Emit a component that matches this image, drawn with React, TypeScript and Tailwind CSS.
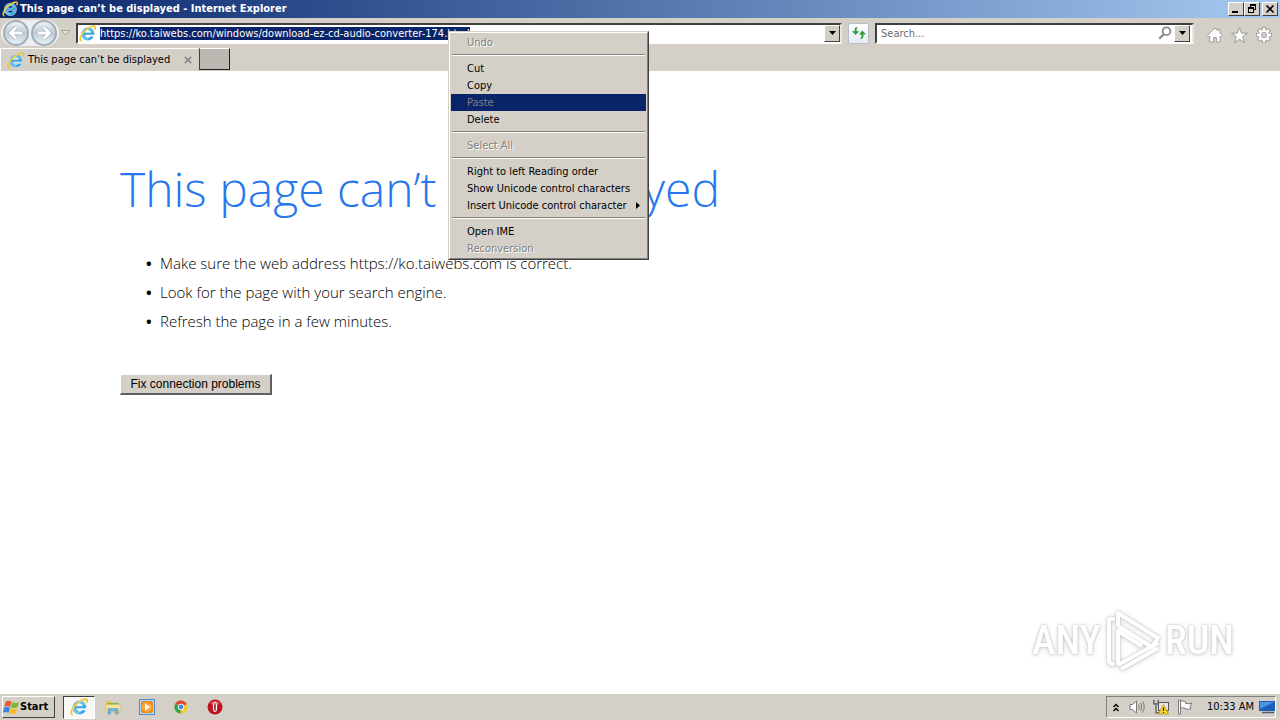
import type { ReactNode } from 'react';

type MenuEntry = { label: string; disabled?: boolean; active?: boolean; submenu?: boolean };

const menuGroups: MenuEntry[][] = [
  [{ label: 'Undo', disabled: true }],
  [
    { label: 'Cut' },
    { label: 'Copy' },
    { label: 'Paste', disabled: true, active: true },
    { label: 'Delete' },
  ],
  [{ label: 'Select All', disabled: true }],
  [
    { label: 'Right to left Reading order' },
    { label: 'Show Unicode control characters' },
    { label: 'Insert Unicode control character', submenu: true },
  ],
  [{ label: 'Open IME' }, { label: 'Reconversion', disabled: true }],
];

const tips = [
  'Make sure the web address https://ko.taiwebs.com is correct.',
  'Look for the page with your search engine.',
  'Refresh the page in a few minutes.',
];

const raised = 'bg-[#d4d0c8] border border-t-white border-l-white border-r-[#404040] border-b-[#404040]';

function IeIcon({ className }: { className: string }) {
  return (
    <svg viewBox="0 0 16 16" className={className} aria-hidden="true">
      <path
        fillRule="evenodd"
        d="M8.500 2.200a6 6 0 0 0-6.200 6.200c0 3.600 2.600 6.200 6.200 6.200 2.800 0 4.900-1.500 5.700-4h-3.500c-.4.800-1.200 1.300-2.200 1.300-1.600 0-2.600-1-2.700-2.500h8.700c.3-4.300-2.100-7.200-6-7.200zM5.900 7c.3-1.400 1.200-2.200 2.600-2.200S10.900 5.600 11.100 7z"
        fill="#36a6e6"
        stroke="#e8f6fd"
        strokeWidth=".5"
      />
      <path d="M3.600 7.600C4.100 5 6 3.500 8.500 3.400c2.300 0 3.700 1.100 4.300 3M4 9.800c.6 2.200 2.300 3.500 4.500 3.500" fill="none" stroke="#8edbfa" strokeWidth="0.900" />
      <path d="M2.400 15C-.4 14.300 1.600 8.800 6.200 4.900 10 1.600 14.300.1 15.100 1.700c.3.700.1 1.700-.4 2.600" fill="none" stroke="#f0c22c" strokeWidth="1.500" />
      <path d="M2.200 12.600C2 10.600 4 7.200 6.800 4.900c2.400-2 5-3.200 6.500-3.200" fill="none" stroke="#fbe68a" strokeWidth="0.500" />
    </svg>
  );
}

function NavButton({ label, flip }: { label: string; flip?: boolean }) {
  return (
    <button
      aria-label={label}
      className="flex size-[26px] items-center justify-center rounded-full border-2 border-[#a4adb7] bg-linear-to-b from-[#edf1f4] via-[#bfcad5] to-[#e4f4fb]"
    >
      <svg viewBox="0 0 16 16" className={flip ? 'size-4 rotate-180' : 'size-4'}>
        <path d="M8 2.500L2.500 8 8 13.500M3 8h11" fill="none" stroke="#9aa6b2" strokeWidth="4" />
        <path d="M8 2.500L2.500 8 8 13.500M3 8h11" fill="none" stroke="#fff" strokeWidth="2.800" />
      </svg>
    </button>
  );
}

function DropButton({ label }: { label: string }) {
  return (
    <button aria-label={label} className={`flex h-[17px] w-4 shrink-0 items-center justify-center ${raised}`}>
      <svg viewBox="0 0 7 4" className="h-1 w-[7px]">
        <path d="M0 0h7L3.500 4z" />
      </svg>
    </button>
  );
}

function WindowButton({ label, children }: { label: string; children: ReactNode }) {
  return (
    <button aria-label={label} className={`h-3.5 w-4 ${raised}`}>
      <svg viewBox="0 0 14 12" className="h-3 w-3.5" fill="none" stroke="#000" shapeRendering="crispEdges">
        {children}
      </svg>
    </button>
  );
}

function TitleBar() {
  return (
    <header className="flex h-[18px] shrink-0 items-center bg-linear-to-r from-[#0a246a] to-[#a6caf0] px-0.5 text-white">
      <IeIcon className="mr-0.5 size-4" />
      <h1 className="flex-1 text-[11px] leading-4 font-bold">This page can’t be displayed - Internet Explorer</h1>
      <WindowButton label="Minimize">
        <path d="M3 9h6" strokeWidth="2" />
      </WindowButton>
      <WindowButton label="Restore">
        <path d="M5 1.500h6M5 2.500h6M5.500 1v3M10.500 1v6M9 6.500h2M3 4.500h6M3 5.500h6M3.500 4v6M8.500 4v6M3 9.500h6" />
      </WindowButton>
      <span className="w-0.5" />
      <WindowButton label="Close">
        <path d="M3.500 2.500l7 7M10.500 2.500l-7 7" strokeWidth="1.600" shapeRendering="auto" />
      </WindowButton>
    </header>
  );
}

function Toolbar() {
  return (
    <div className="flex h-[30px] shrink-0 items-center">
      <div className="flex w-[76px] shrink-0 items-center pl-px">
        <div className="flex gap-0.5 rounded-full bg-[#eceeef] px-0.5">
          <NavButton label="Back" />
          <NavButton label="Forward" flip />
        </div>
        <button aria-label="Recent pages" className="ml-0.5">
          <svg viewBox="0 0 9 6" className="h-1.5 w-[9px]">
            <path d="M.5.5h8l-4 4.500z" fill="#e4e2de" stroke="#aca899" />
          </svg>
        </button>
      </div>
      <div className="flex h-[21px] min-w-0 flex-1 items-center border-2 border-t-[#404040] border-r-[#e8e6e1] border-b-white border-l-[#404040] bg-white">
        <IeIcon className="mr-1 ml-px size-[17px] shrink-0" />
        <input
          aria-label="Address"
          readOnly
          value="https://ko.taiwebs.com/windows/download-ez-cd-audio-converter-174.html"
          className="field-sizing-content h-[13px] bg-[#0a246a] text-[11px] leading-[13px] text-white outline-none"
        />
        <span className="flex-1" />
        <DropButton label="Show address list" />
      </div>
      <button aria-label="Refresh" className="mx-1.5 flex size-[21px] shrink-0 items-center justify-center rounded-xs border border-[#b6bfc9] bg-linear-to-b from-white to-[#e3edf4]">
        <svg viewBox="0 0 16 16" className="size-4" fill="#2f9e3a">
          <path d="M6.800 2C4.500 2 3.600 3 3.600 5v1.200H1L4.600 10l3.600-3.800H5.600V5c0-1.200.3-1.800 1.200-3zM9 14c2.400 0 3.400-1 3.400-3V9.400H15l-3.600-3.900-3.600 3.900h2.600V11c0 1.200-.4 1.800-1.400 3z" />
        </svg>
      </button>
      <div className="flex h-[21px] w-[319px] shrink-0 items-center border-2 border-t-[#404040] border-r-[#e8e6e1] border-b-white border-l-[#404040] bg-white pr-0.5">
        <input
          aria-label="Search"
          placeholder="Search..."
          className="h-[17px] min-w-0 flex-1 pt-px pl-1 text-[11px] leading-4 outline-none placeholder:text-[#6d6d6d]"
        />
        <button aria-label="Search the web" className="mr-0.5">
          <svg viewBox="0 0 14 14" className="size-3.5" fill="none" stroke="#8a8a8a" strokeWidth="1.800">
            <circle cx="8.500" cy="5.200" r="3.900" />
            <path d="M5.600 8.400L1.200 12.800" strokeWidth="2.200" />
          </svg>
        </button>
        <DropButton label="Search options" />
      </div>
      <nav className="flex w-[86px] shrink-0 items-center justify-end gap-2 pt-1 pr-2">
        <button aria-label="Home">
          <svg viewBox="0 0 16 16" className="size-4" fill="#fff" stroke="#969696" strokeWidth=".900" strokeLinejoin="round">
            <path d="M8 1L.6 8.400l1.500 1.500.7-.7V15h3.800v-4.500h2.800V15h3.800V9.200l.7.700 1.500-1.500-2.500-2.500V2.200h-2.200v1.500z" />
          </svg>
        </button>
        <button aria-label="Favorites">
          <svg viewBox="0 0 16 16" className="size-[17px]" fill="#fff" stroke="#969696" strokeWidth=".900" strokeLinejoin="round">
            <path d="M8 .6l1.900 5.200h5.500L11 9.200l1.600 5.600L8 11.500l-4.600 3.300L5 9.200.6 5.800h5.500z" />
          </svg>
        </button>
        <button aria-label="Tools">
          <svg viewBox="0 0 16 16" className="size-4">
            <g stroke="#969696" strokeWidth="3.800">
              <path d="M8 0v16M0 8h16M2.400 2.400l11.200 11.200M13.600 2.400L2.400 13.600" />
            </g>
            <circle cx="8" cy="8" r="5.700" fill="#969696" />
            <g stroke="#fff" strokeWidth="2.300">
              <path d="M8 .8v14.400M.8 8h14.400M3 3l10 10M13 3L3 13" />
            </g>
            <circle cx="8" cy="8" r="4" fill="#d4d0c8" stroke="#fff" strokeWidth="2.500" />
            <circle cx="8" cy="8" r="2.600" fill="#d4d0c8" stroke="#969696" strokeWidth=".800" />
          </svg>
        </button>
      </nav>
    </div>
  );
}

function TabBar() {
  return (
    <div className="flex h-[23px] shrink-0 items-start">
      <div className="flex h-[23px] w-[198px] items-center border-t border-l border-white pr-1.5 pl-1.5">
        <IeIcon className="mr-1 size-[17px]" />
        <a href="#page" className="flex-1 text-[11px] leading-4 whitespace-nowrap">This page can’t be displayed</a>
        <button aria-label="Close tab">
          <svg viewBox="0 0 8 8" className="size-2">
            <path d="M.8.8l6.400 6.400M7.200.8L.8 7.200" stroke="#8a8a8a" strokeWidth="1.800" />
          </svg>
        </button>
      </div>
      <button aria-label="New tab" className="ml-px h-[22px] w-[31px] border border-t-white border-r-[#202020] border-b-[#202020] border-l-[#404040] bg-[#bdb8b1]" />
    </div>
  );
}

function ContextMenu() {
  return (
    <div role="menu" className="absolute top-[31px] left-[448px] w-[201px] border border-t-[#d4d0c8] border-r-[#404040] border-b-[#404040] border-l-[#d4d0c8] bg-[#d4d0c8] text-[11px]">
      <div className="border border-t-white border-r-[#808080] border-b-[#808080] border-l-white p-px">
        {menuGroups.map((group, i) => (
          <div key={i}>
            {i > 0 && <hr className="mx-px mt-[3px] mb-1 h-0.5 border-t border-b border-t-[#808080] border-b-white" />}
            {group.map((item) => (
              <button
                key={item.label}
                role="menuitem"
                disabled={item.disabled}
                className={`flex h-[17px] w-full items-center justify-between pr-1.5 pl-4 leading-[17px] whitespace-nowrap ${
                  item.active ? 'bg-[#0a246a] text-[#808080]' : item.disabled ? 'text-[#808080] [text-shadow:1px_1px_0_#fff]' : 'text-black'
                }`}
              >
                {item.label}
                {item.submenu && (
                  <svg viewBox="0 0 4 7" className="h-[7px] w-1">
                    <path d="M0 0v7l4-3.500z" />
                  </svg>
                )}
              </button>
            ))}
          </div>
        ))}
      </div>
    </div>
  );
}

function Watermark() {
  return (
    <div className="absolute right-[46px] bottom-5 flex h-16 items-center gap-1 font-['Roboto_Condensed','Liberation_Sans_Narrow',Roboto,sans-serif] text-[40px] leading-10 font-medium text-white [filter:drop-shadow(0_0_1px_#bbb)_drop-shadow(0_1px_2px_#ddd)]">
      <span>ANY</span>
      <svg viewBox="0 0 56 64" className="h-16 w-14" fill="none" stroke="#fff" strokeWidth="4" strokeLinejoin="round">
        <path d="M10 10H4v43l5 3" />
        <path d="M37 37L13 22v34M13 17V4l40 25-6 9L13 17" />
        <path d="M13 56l40-22M16 60l37-21" />
      </svg>
      <span>RUN</span>
    </div>
  );
}

function ErrorPage() {
  return (
    <main id="page" className="relative flex-1 bg-white px-[120px] pt-[82px]">
      <h2 className="font-['Open_Sans','Noto_Sans',sans-serif] text-5xl leading-[72px] font-light whitespace-nowrap text-[#2778ec]">
        This page can’t be displayed
      </h2>
      <ul className="mt-6 pl-6 font-['Open_Sans','Noto_Sans',sans-serif] text-[15px] leading-[29px] font-light text-black">
        {tips.map((tip) => (
          <li key={tip} className="flex">
            <span className="w-4 pl-0.5 font-bold">•</span>
            {tip}
          </li>
        ))}
      </ul>
      <button className="mt-[38px] h-[21px] w-[152px] border border-t-white border-r-2 border-r-[#606060] border-b-2 border-b-[#606060] border-l-white bg-[#d4d0c8] font-['Liberation_Sans',sans-serif] text-xs leading-4 whitespace-nowrap">
        Fix connection problems
      </button>
      <Watermark />
    </main>
  );
}

function TaskBar() {
  return (
    <footer className="flex h-[27px] shrink-0 items-center border-t border-white pr-1 pl-0.5">
      <button className={`flex h-[22px] w-[53px] items-center text-[11px] font-bold ${raised}`}>
        <svg viewBox="0 0 16 16" className="size-[17px] shrink-0">
          <path d="M2.500 2.500c2-1.300 3.800-1 5.500 0L6.700 7.400c-1.700-1-3.400-1.200-5.500 0z" fill="#e8592b" />
          <path d="M8.600 2.900c2 1.300 4.200 1 6.400 0l-1.400 4.900c-2 1-4.300 1-6.300-.1z" fill="#78b83a" />
          <path d="M1 8.200c2-1.300 3.900-1 5.500 0l-1.300 4.900c-1.700-1-3.400-1.200-5.500 0z" fill="#3a83d8" />
          <path d="M7.100 8.600c2 1.300 4.200 1 6.300 0L12 13.500c-2 1-4.200 1-6.200-.1z" fill="#f6bd22" />
        </svg>
        Start
      </button>
      <div className="ml-2 flex items-center">
        <button aria-label="Internet Explorer" className="flex h-[23px] w-8 items-center justify-center border border-t-[#404040] border-r-white border-b-white border-l-[#404040] bg-[#f8f8f6]">
          <IeIcon className="size-[18px]" />
        </button>
        <button aria-label="Windows Explorer" className="flex w-9 justify-center">
          <svg viewBox="0 0 16 16" className="size-4">
            <path d="M1 2h5l1 1.500h7V13H1z" fill="#e6c45c" />
            <path d="M2 4h12v2H2z" fill="#7db868" />
            <path d="M1 5.500h14V13H1z" fill="#f7e49b" stroke="#d8b44c" strokeWidth=".5" />
            <path d="M3 15V9.500h10V15h-2.500v-3h-5v3z" fill="#72b7de" stroke="#4b8fbd" strokeWidth=".5" />
          </svg>
        </button>
        <button aria-label="Media Player" className="flex w-8 justify-center">
          <svg viewBox="0 0 16 16" className="size-4">
            <rect x=".5" y=".5" width="15" height="15" fill="#b8d8f0" stroke="#4d8fc8" />
            <rect x="2" y="2" width="12" height="12" rx="2" fill="#f18a18" />
            <circle cx="8" cy="8" r="5" fill="#f8a640" />
            <path d="M6 4.500v7L11.500 8z" fill="#fff" />
          </svg>
        </button>
        <button aria-label="Chrome" className="flex w-9 justify-center">
          <svg viewBox="0 0 16 16" className="size-3.5">
            <circle cx="8" cy="8" r="7.500" fill="#f8ca2c" />
            <path d="M8 8L1.500 4.200a7.500 7.500 0 0 1 13 .3z" fill="#df4634" />
            <path d="M8 8L1.500 4.200A7.500 7.500 0 0 0 7.400 15.500z" fill="#35a250" />
            <circle cx="8" cy="8" r="3.600" fill="#fff" />
            <circle cx="8" cy="8" r="2.800" fill="#4688e8" />
          </svg>
        </button>
        <button aria-label="Opera" className="flex w-8 justify-center">
          <svg viewBox="0 0 16 16" className="size-4">
            <circle cx="8" cy="8" r="7.500" fill="#bd151d" />
            <path d="M3 4a7 7 0 0 1 10 0c-2 3-8 3-10 0z" fill="#dc5558" />
            <ellipse cx="8" cy="8" rx="2.200" ry="5" fill="#fff" />
            <ellipse cx="8" cy="8" rx=".8" ry="4.200" fill="#a00d15" />
          </svg>
        </button>
      </div>
      <div className="ml-auto flex h-[22px] items-center border border-t-[#808080] border-r-white border-b-white border-l-[#808080] pl-1.5">
        <button aria-label="Show hidden icons">
          <svg viewBox="0 0 6 9" className="h-[9px] w-1.5" fill="none" stroke="#000" strokeWidth="1.400">
            <path d="M.5 4L3 1.500 5.500 4M.5 8L3 5.500 5.500 8" />
          </svg>
        </button>
        <button aria-label="Volume" className="ml-2.5">
          <svg viewBox="0 0 16 16" className="size-4" fill="none" stroke="#777">
            <path d="M1 5.500h2.500L7.500 2v12l-4-3.500H1z" fill="#fff" />
            <path d="M9.500 5.500c1 1.500 1 3.500 0 5M11.500 4c1.700 2.500 1.700 5.500 0 8M13.500 2.500c2.300 3.500 2.300 7.500 0 11" />
          </svg>
        </button>
        <button aria-label="Network" className="ml-2">
          <svg viewBox="0 0 16 16" className="size-4">
            <rect x="5.500" y="3.500" width="10" height="8" fill="#e3e6e8" stroke="#555" />
            <path d="M.8.800v4h4.400v-4M3 4.800v9h4.500" fill="none" stroke="#555" strokeWidth="1.200" />
            <path d="M10.500 5.500l5 9.500h-10z" fill="#fbd82d" stroke="#b88a00" strokeWidth=".7" />
            <path d="M10.500 8.500v3.500M10.500 13v1" stroke="#222" strokeWidth="1.200" />
          </svg>
        </button>
        <button aria-label="Action Center" className="ml-2">
          <svg viewBox="0 0 16 16" className="size-4" stroke="#777" fill="#fff">
            <path d="M3.500 2.500c2-.8 3.500-.5 5 .3v1.400c2 .8 4 .6 6.500-.2l-2 3 1 3c-2 .4-4 .3-6-.6-1.500-.7-3-.8-4.500-.4z" />
            <path d="M1.500 1h2v14h-2z" />
          </svg>
        </button>
        <time className="ml-3.5 text-[11px] leading-4 whitespace-nowrap">10:33 AM</time>
        <button aria-label="Show desktop" className="ml-[5px]">
          <svg viewBox="0 0 16 16" className="size-4">
            <rect x="0" y="2" width="16" height="10" fill="#1d5fb8" />
            <path d="M1 3h14L1 10z" fill="#4a93e0" />
            <path d="M3 13.500h12" stroke="#4d5a6c" strokeWidth="1.500" />
          </svg>
        </button>
      </div>
    </footer>
  );
}

export default function App() {
  return (
    <div className="relative flex h-screen flex-col overflow-hidden bg-[#d4d0c8] font-['DejaVu_Sans_Condensed','Noto_Sans',sans-serif] text-black">
      <TitleBar />
      <Toolbar />
      <TabBar />
      <ErrorPage />
      <TaskBar />
      <ContextMenu />
    </div>
  );
}
